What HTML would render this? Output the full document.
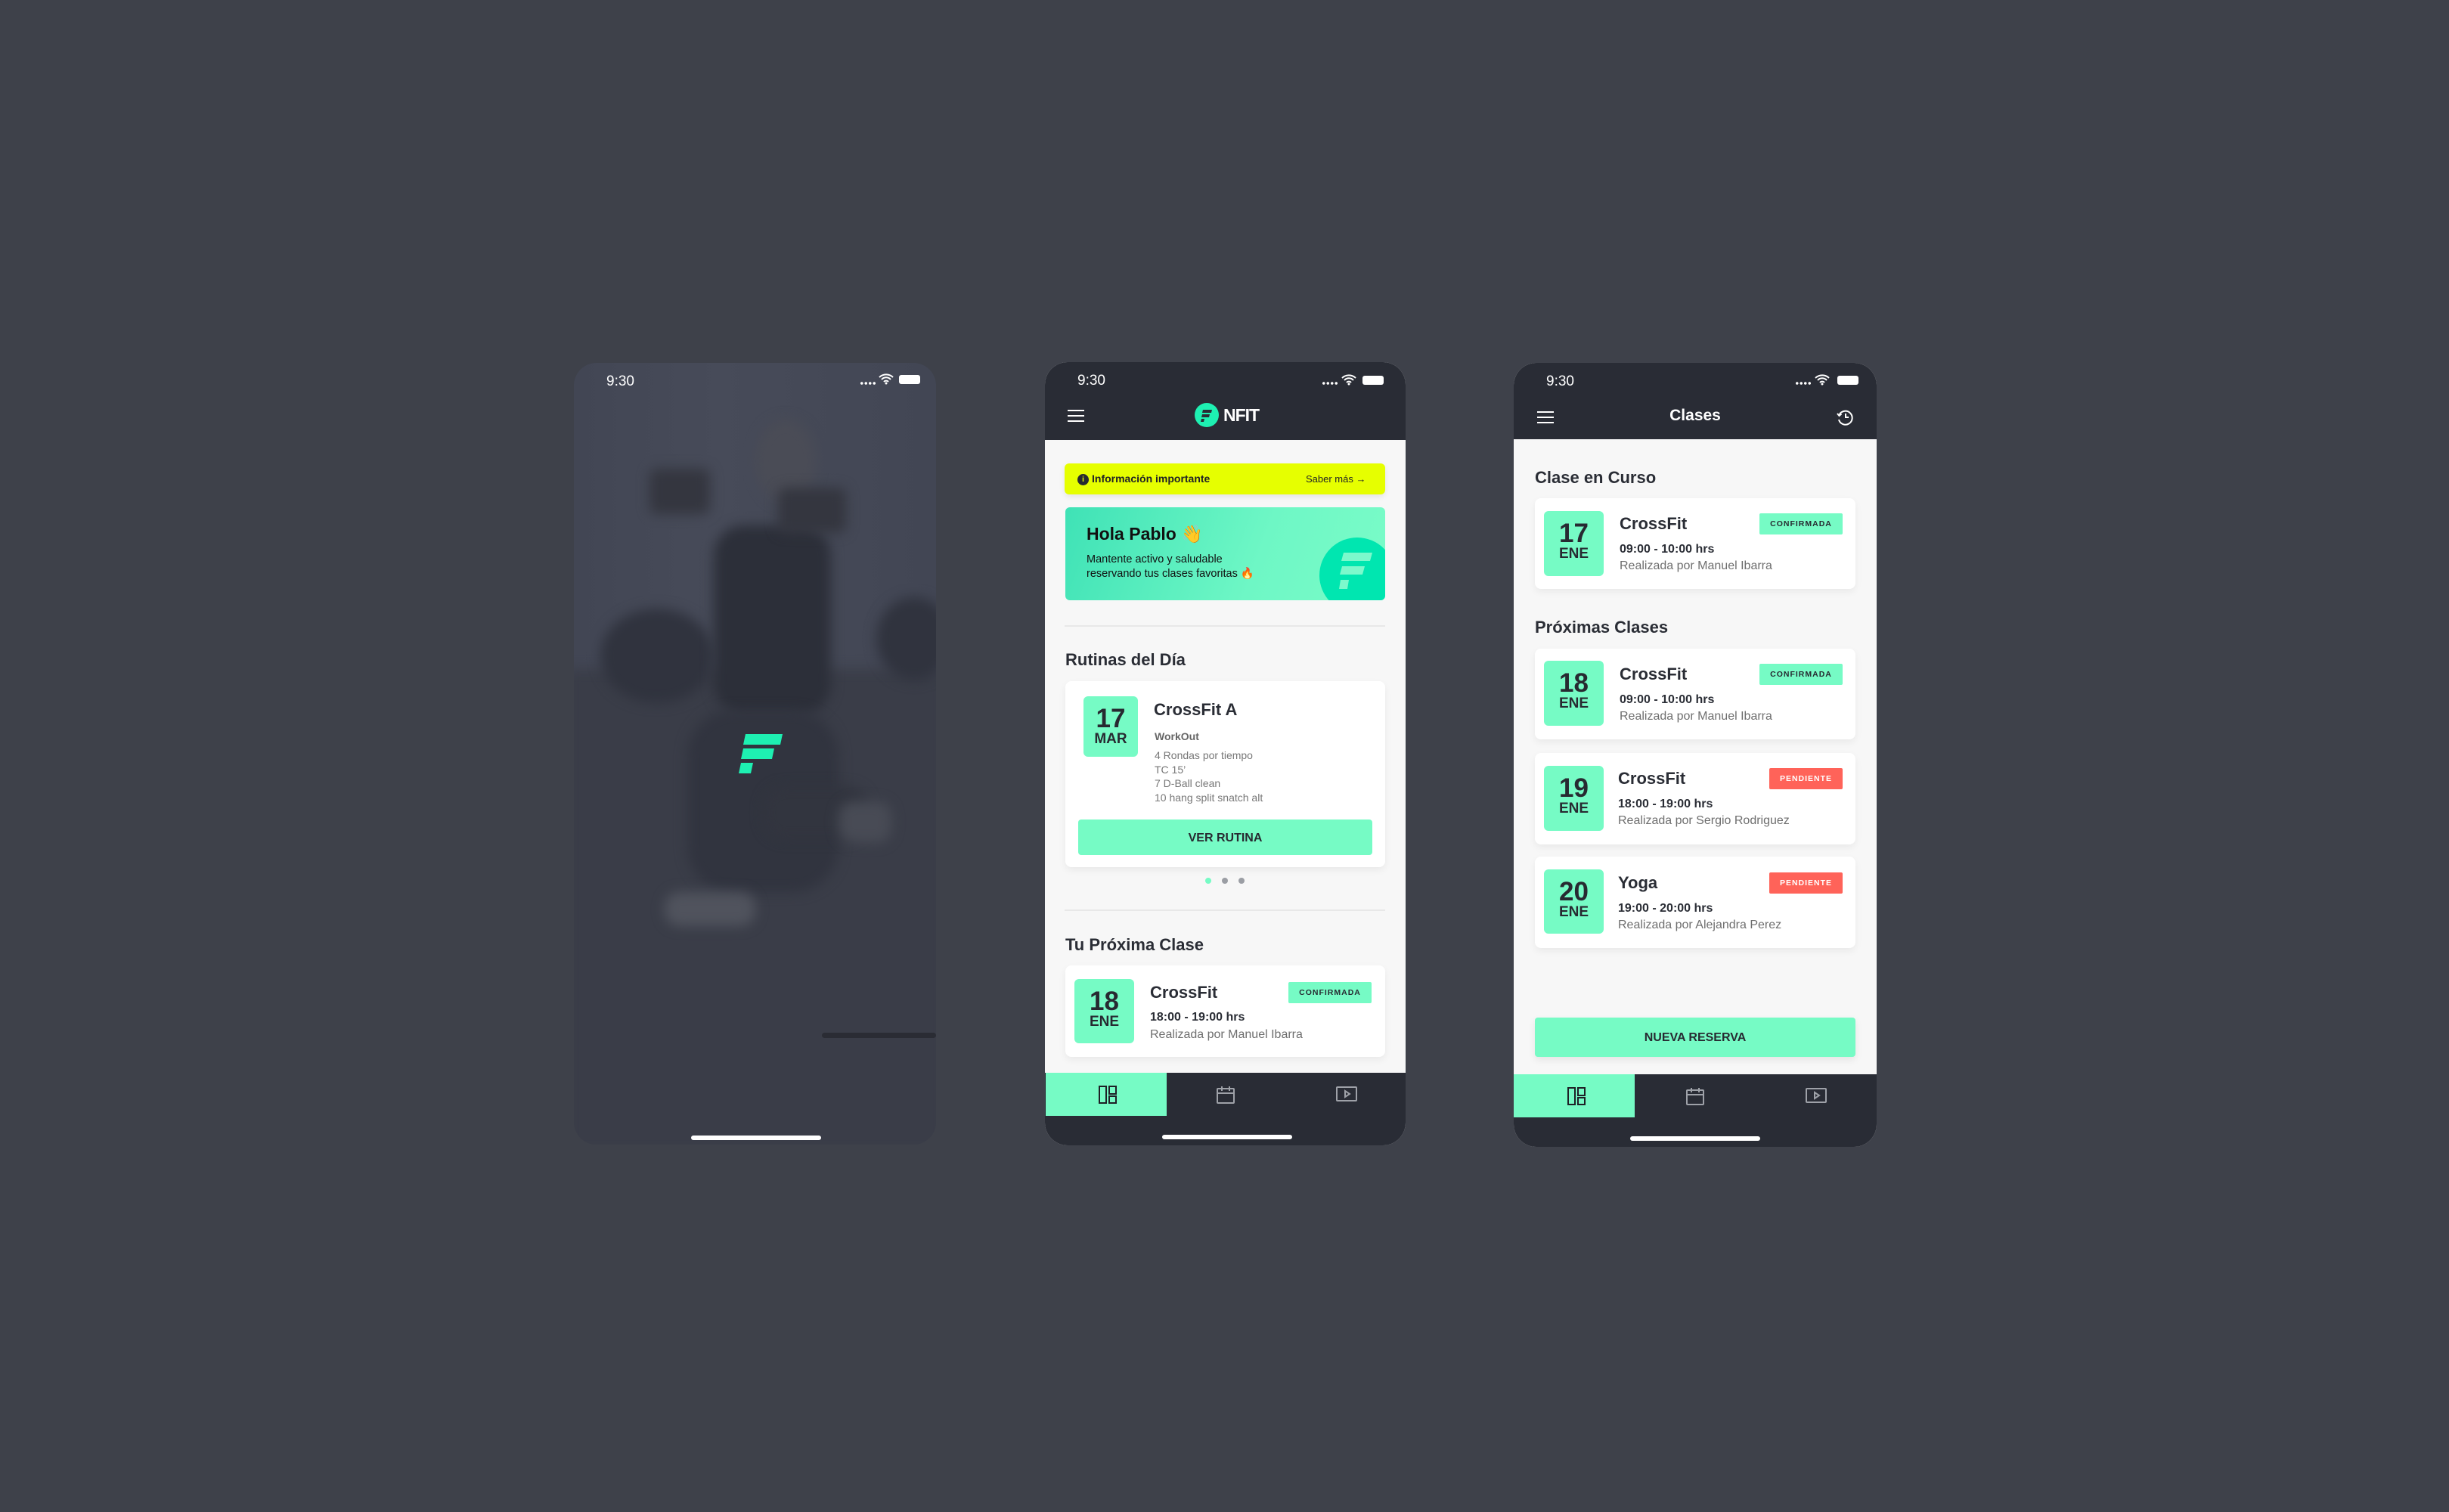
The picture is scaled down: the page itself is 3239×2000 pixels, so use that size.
<!DOCTYPE html>
<html><head><meta charset="utf-8"><style>
*{margin:0;padding:0;box-sizing:border-box}
body{width:3239px;height:2000px;background:#3e414a;font-family:"Liberation Sans",Arial,sans-serif;position:relative;overflow:hidden}
.ph{position:absolute;border-radius:30px;overflow:hidden;background:#f7f7f7}
.a{position:absolute}
.hdr{position:absolute;left:0;top:0;width:100%;background:#292c35}
.st{position:absolute;left:43px;top:14px;color:#fff;font-size:19px}
.ham{position:absolute;width:22px;height:2px;background:#fff;box-shadow:0 7px 0 #fff,0 -7px 0 #fff}
.card{position:absolute;background:#fff;border-radius:8px;box-shadow:0 4px 10px rgba(0,0,0,.06)}
.date{position:absolute;background:#76fbc5;border-radius:6px;text-align:center;color:#272a31;font-weight:bold}
.date b{display:block;font-size:35px;line-height:34px;margin-top:13px}
.date i{display:block;font-style:normal;font-size:19px;line-height:20px}
.h2{position:absolute;font-size:22px;font-weight:bold;color:#2a2d35}
.ct{position:absolute;font-size:22px;font-weight:bold;color:#2a2d35}
.tm{position:absolute;font-size:16px;font-weight:bold;color:#2a2d35}
.au{position:absolute;font-size:16px;color:#6e6e6e}
.bd{position:absolute;width:110px;height:28px;line-height:28px;text-align:center;font-size:10.5px;font-weight:bold;letter-spacing:1px;border-radius:2px}
.ok{background:#76fbc5;color:#272a31}
.pd{background:#ff6359;color:#fff}
.nav{position:absolute;left:0;width:100%;height:57px;background:#292c35}
.home{position:absolute;height:6px;width:172px;border-radius:3px;background:#fff}
.dots{position:absolute;width:22px;height:4px;background:radial-gradient(circle,#fff 1.6px,transparent 2px) 0 0/5.5px 4px repeat-x}
.bl{filter:blur(8px)}
</style></head><body>

<!-- Phone 1 -->
<div class="ph" style="left:759px;top:480px;width:479px;height:1034px;background:#3b3f4b">
  <div class="a" style="left:0;top:0;width:479px;height:420px;background:linear-gradient(90deg,#424654,#474b59 40%,#424654)"></div>
  <div class="a bl" style="left:-10px;top:405px;width:500px;height:640px;background:#3a3d48"></div>
  <div class="a bl" style="left:35px;top:325px;width:150px;height:125px;border-radius:50%;background:#30333e"></div>
  <div class="a bl" style="left:400px;top:310px;width:100px;height:110px;border-radius:50%;background:#30333e"></div>
  <div class="a bl" style="left:185px;top:215px;width:155px;height:250px;border-radius:40px;background:#2c2f39"></div>
  <div class="a bl" style="left:240px;top:75px;width:80px;height:110px;border-radius:50%;background:#4a4c56"></div>
  <div class="a bl" style="left:100px;top:140px;width:80px;height:60px;border-radius:10px;background:#34363f"></div>
  <div class="a bl" style="left:270px;top:165px;width:90px;height:60px;border-radius:10px;background:#34363f"></div>
  <div class="a bl" style="left:150px;top:460px;width:200px;height:240px;border-radius:60px;background:#31343f"></div>
  <div class="a bl" style="left:250px;top:560px;width:140px;height:70px;border-radius:30px;background:#32353f"></div>
  <div class="a bl" style="left:120px;top:700px;width:120px;height:45px;border-radius:20px;background:#50535d"></div>
  <div class="a bl" style="left:350px;top:580px;width:70px;height:55px;border-radius:20px;background:#484b55"></div>
  <div class="a" style="left:328px;top:886px;width:151px;height:7px;border-radius:4px;background:#2a2c34"></div>
  <svg class="a" style="left:218px;top:480px" width="62" height="75" viewBox="0 0 62 75"><polygon points="9,11 58,11 55,25 6,25" fill="#1ef0b2"/><polygon points="6,30 47,30 44,44 3,44" fill="#1ef0b2"/><polygon points="3,49 19,49 16,63 0,63" fill="#1ef0b2"/></svg>
  <div class="st">9:30</div>
  <div class="dots" style="left:378px;top:25px"></div>
  <svg class="a" style="left:403px;top:14px" width="20" height="15" viewBox="0 0 20 15"><path d="M1 5a13 13 0 0 1 18 0M4 8a8 8 0 0 1 12 0M7 11a4 4 0 0 1 6 0" stroke="#fff" stroke-width="2" fill="none"/><circle cx="10" cy="13" r="1.5" fill="#fff"/></svg>
  <div class="a" style="left:430px;top:16px;width:28px;height:12px;border-radius:3px;background:#fff"></div>
  <div class="home" style="left:155px;top:1022px"></div>
</div>

<!-- Phone 2 -->
<div class="ph" style="left:1382px;top:479px;width:477px;height:1036px">
  <div class="hdr" style="height:103px"></div>
  <div class="st">9:30</div>
  <div class="dots" style="left:366px;top:26px"></div>
  <svg class="a" style="left:392px;top:16px" width="20" height="15" viewBox="0 0 20 15"><path d="M1 5a13 13 0 0 1 18 0M4 8a8 8 0 0 1 12 0M7 11a4 4 0 0 1 6 0" stroke="#fff" stroke-width="2" fill="none"/><circle cx="10" cy="13" r="1.5" fill="#fff"/></svg>
  <div class="a" style="left:420px;top:18px;width:28px;height:12px;border-radius:3px;background:#fff"></div>
  <div class="ham" style="left:30px;top:70px"></div>
  <svg class="a" style="left:198px;top:54px" width="32" height="32" viewBox="0 0 32 32"><circle cx="16" cy="16" r="16" fill="#1ef0b2"/><polygon points="11,9 23,9 22,13 10,13" fill="#292c35"/><polygon points="10,15 20,15 19,19 9,19" fill="#292c35"/><polygon points="9,21 13,21 12,25 8,25" fill="#292c35"/></svg>
  <div class="a" style="left:236px;top:57px;color:#fff;font-size:23px;font-weight:bold;letter-spacing:-1px">NFIT</div>
  <div class="a" style="left:26px;top:134px;width:424px;height:41px;background:#e6ff00;border-radius:6px;box-shadow:0 3px 8px rgba(0,0,0,.08)"></div>
  <div class="a" style="left:43px;top:148px;width:15px;height:15px;border-radius:50%;background:#272a31;color:#e6ff00;font-size:10px;font-weight:bold;text-align:center;line-height:15px">i</div>
  <div class="a" style="left:62px;top:146px;font-size:14px;font-weight:bold;color:#1e2026">Información importante</div>
  <div class="a" style="left:345px;top:147px;font-size:13px;color:#1e2026">Saber más →</div>
  <div class="a" style="left:27px;top:192px;width:423px;height:123px;border-radius:6px;overflow:hidden;background:linear-gradient(110deg,#3fe2b6,#6ef7c5 60%,#7afcc8)">
    <div class="a" style="left:336px;top:40px;width:100px;height:100px;border-radius:50%;background:#00e6b0"></div>
    <svg class="a" style="left:362px;top:60px" width="44" height="60" viewBox="0 0 44 60"><polygon points="6,0 44,0 41,11 3,11" fill="#7cf9cc"/><polygon points="4,18 34,18 31,29 1,29" fill="#7cf9cc"/><polygon points="2,36 13,36 11,48 0,48" fill="#7cf9cc"/></svg>
    <div class="a" style="left:28px;top:22px;font-size:23px;font-weight:bold;color:#111">Hola Pablo 👋</div>
    <div class="a" style="left:28px;top:60px;font-size:14.5px;line-height:19px;color:#111">Mantente activo y saludable<br>reservando tus clases favoritas 🔥</div>
  </div>
  <div class="a" style="left:26px;top:348px;width:424px;height:2px;background:#e8e8e8"></div>
  <div class="h2" style="left:27px;top:381px">Rutinas del Día</div>
  <div class="card" style="left:27px;top:422px;width:423px;height:246px"></div>
  <div class="date" style="left:51px;top:442px;width:72px;height:80px"><b>17</b><i>MAR</i></div>
  <div class="ct" style="left:144px;top:447px">CrossFit A</div>
  <div class="a" style="left:145px;top:487px;font-size:14px;font-weight:bold;color:#666">WorkOut</div>
  <div class="a" style="left:145px;top:511px;font-size:14px;line-height:18.5px;color:#777">4 Rondas por tiempo<br>TC 15’<br>7 D-Ball clean<br>10 hang split snatch alt</div>
  <div class="a" style="left:44px;top:605px;width:389px;height:47px;background:#76fbc5;border-radius:4px;text-align:center;line-height:49px;font-size:16px;font-weight:bold;color:#272a31">VER RUTINA</div>
  <div class="a" style="left:212px;top:682px;width:8px;height:8px;border-radius:50%;background:#76fbc5"></div>
  <div class="a" style="left:234px;top:682px;width:8px;height:8px;border-radius:50%;background:#9b9ea4"></div>
  <div class="a" style="left:256px;top:682px;width:8px;height:8px;border-radius:50%;background:#9b9ea4"></div>
  <div class="a" style="left:26px;top:724px;width:424px;height:2px;background:#e8e8e8"></div>
  <div class="h2" style="left:27px;top:758px">Tu Próxima Clase</div>
  <div class="card" style="left:27px;top:798px;width:423px;height:121px"></div>
  <div class="date" style="left:39px;top:816px;width:79px;height:85px"><b>18</b><i>ENE</i></div>
  <div class="ct" style="left:139px;top:821px">CrossFit</div>
  <div class="bd ok" style="left:322px;top:820px">CONFIRMADA</div>
  <div class="tm" style="left:139px;top:858px">18:00 - 19:00 hrs</div>
  <div class="au" style="left:139px;top:881px">Realizada por Manuel Ibarra</div>
  <div class="nav" style="top:940px;height:96px"></div>
  <div class="a" style="left:1px;top:940px;width:160px;height:57px;background:#76fbc5"></div>
  <svg class="a" style="left:70px;top:956px" width="26" height="26" viewBox="0 0 26 26" fill="none" stroke="#1e2026" stroke-width="2"><rect x="2" y="2" width="9" height="22"/><rect x="15" y="2" width="9" height="10"/><rect x="15" y="15" width="9" height="9"/></svg>
  <svg class="a" style="left:226px;top:956px" width="26" height="26" viewBox="0 0 26 26" fill="none" stroke="#9ea1a8" stroke-width="2"><rect x="2" y="5" width="22" height="19" rx="1"/><path d="M2 11h22M8 2v6M18 2v6"/></svg>
  <svg class="a" style="left:385px;top:958px" width="28" height="22" viewBox="0 0 28 22" fill="none" stroke="#9ea1a8" stroke-width="2"><rect x="1" y="1" width="26" height="18" rx="1"/><path d="M12 6v8l6-4z"/></svg>
  <div class="home" style="left:155px;top:1022px"></div>
</div>

<!-- Phone 3 -->
<div class="ph" style="left:2002px;top:480px;width:480px;height:1037px">
  <div class="hdr" style="height:101px"></div>
  <div class="st">9:30</div>
  <div class="dots" style="left:372px;top:25px"></div>
  <svg class="a" style="left:398px;top:15px" width="20" height="15" viewBox="0 0 20 15"><path d="M1 5a13 13 0 0 1 18 0M4 8a8 8 0 0 1 12 0M7 11a4 4 0 0 1 6 0" stroke="#fff" stroke-width="2" fill="none"/><circle cx="10" cy="13" r="1.5" fill="#fff"/></svg>
  <div class="a" style="left:428px;top:17px;width:28px;height:12px;border-radius:3px;background:#fff"></div>
  <div class="ham" style="left:31px;top:71px"></div>
  <div class="a" style="left:0;top:58px;width:480px;text-align:center;color:#fff;font-size:21px;font-weight:bold">Clases</div>
  <svg class="a" style="left:426px;top:60px" width="24" height="24" viewBox="0 0 24 24" fill="none" stroke="#fff" stroke-width="2"><path d="M4.5 9A9 9 0 1 1 4 15"/><path d="M2 7l2.5 3 3-2.5"/><path d="M13 7v5h4"/></svg>
  <div class="h2" style="left:28px;top:139px">Clase en Curso</div>
  <div class="card" style="left:28px;top:179px;width:424px;height:120px"></div>
  <div class="date" style="left:40px;top:196px;width:79px;height:86px"><b>17</b><i>ENE</i></div>
  <div class="ct" style="left:140px;top:200px">CrossFit</div>
  <div class="bd ok" style="left:325px;top:199px">CONFIRMADA</div>
  <div class="tm" style="left:140px;top:238px">09:00 - 10:00 hrs</div>
  <div class="au" style="left:140px;top:260px">Realizada por Manuel Ibarra</div>

  <div class="h2" style="left:28px;top:337px">Próximas Clases</div>
  <div class="card" style="left:28px;top:378px;width:424px;height:120px"></div>
  <div class="date" style="left:40px;top:394px;width:79px;height:86px"><b>18</b><i>ENE</i></div>
  <div class="ct" style="left:140px;top:399px">CrossFit</div>
  <div class="bd ok" style="left:325px;top:398px">CONFIRMADA</div>
  <div class="tm" style="left:140px;top:437px">09:00 - 10:00 hrs</div>
  <div class="au" style="left:140px;top:459px">Realizada por Manuel Ibarra</div>

  <div class="card" style="left:28px;top:516px;width:424px;height:121px"></div>
  <div class="date" style="left:40px;top:533px;width:79px;height:86px"><b>19</b><i>ENE</i></div>
  <div class="ct" style="left:138px;top:537px">CrossFit</div>
  <div class="bd pd" style="left:338px;top:536px;width:97px">PENDIENTE</div>
  <div class="tm" style="left:138px;top:575px">18:00 - 19:00 hrs</div>
  <div class="au" style="left:138px;top:597px">Realizada por Sergio Rodriguez</div>

  <div class="card" style="left:28px;top:653px;width:424px;height:121px"></div>
  <div class="date" style="left:40px;top:670px;width:79px;height:85px"><b>20</b><i>ENE</i></div>
  <div class="ct" style="left:138px;top:675px">Yoga</div>
  <div class="bd pd" style="left:338px;top:674px;width:97px">PENDIENTE</div>
  <div class="tm" style="left:138px;top:713px">19:00 - 20:00 hrs</div>
  <div class="au" style="left:138px;top:735px">Realizada por Alejandra Perez</div>

  <div class="a" style="left:28px;top:866px;width:424px;height:52px;background:#76fbc5;border-radius:4px;text-align:center;line-height:54px;font-size:16px;font-weight:bold;color:#272a31;box-shadow:0 4px 10px rgba(0,0,0,.08)">NUEVA RESERVA</div>
  <div class="nav" style="top:941px;height:96px"></div>
  <div class="a" style="left:0;top:941px;width:160px;height:57px;background:#76fbc5"></div>
  <svg class="a" style="left:70px;top:957px" width="26" height="26" viewBox="0 0 26 26" fill="none" stroke="#1e2026" stroke-width="2"><rect x="2" y="2" width="9" height="22"/><rect x="15" y="2" width="9" height="10"/><rect x="15" y="15" width="9" height="9"/></svg>
  <svg class="a" style="left:227px;top:957px" width="26" height="26" viewBox="0 0 26 26" fill="none" stroke="#9ea1a8" stroke-width="2"><rect x="2" y="5" width="22" height="19" rx="1"/><path d="M2 11h22M8 2v6M18 2v6"/></svg>
  <svg class="a" style="left:386px;top:959px" width="28" height="22" viewBox="0 0 28 22" fill="none" stroke="#9ea1a8" stroke-width="2"><rect x="1" y="1" width="26" height="18" rx="1"/><path d="M12 6v8l6-4z"/></svg>
  <div class="home" style="left:154px;top:1023px"></div>
</div>
</body></html>
